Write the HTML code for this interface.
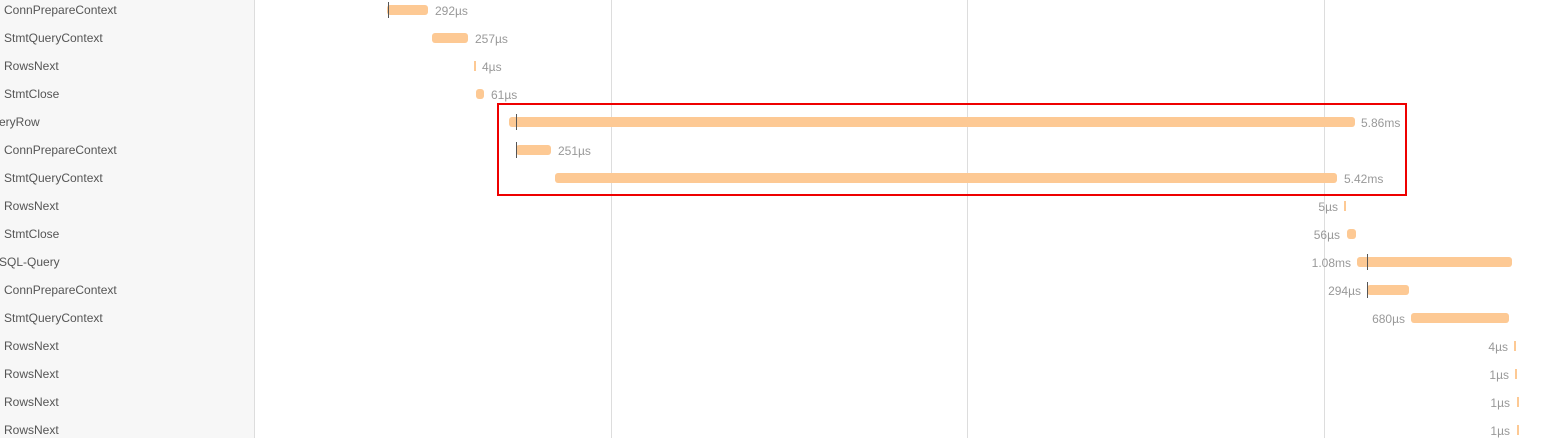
<!DOCTYPE html><html><head><style>
body{margin:0;width:1559px;height:438px;overflow:hidden;background:#fff;font-family:"Liberation Sans",Arial,sans-serif;font-size:12px;position:relative}
.side{position:absolute;left:0;top:0;width:254px;height:438px;background:#f7f7f7;border-right:1px solid #ddd;overflow:hidden}
.l{position:absolute;color:#555;white-space:nowrap;line-height:14px}
.g{position:absolute;top:0;width:1px;height:438px;background:#ddd}
.b{position:absolute;height:10px;background:#fdc994;border-radius:3px}
.t{position:absolute;width:1px;height:16px;background:#555}
.d{position:absolute;color:#999;white-space:nowrap;line-height:14px}
.r{text-align:right;width:60px}
</style></head><body>
<div class="side">
<div class="l" style="left:4px;top:3px">ConnPrepareContext</div>
<div class="l" style="left:4px;top:31px">StmtQueryContext</div>
<div class="l" style="left:4px;top:59px">RowsNext</div>
<div class="l" style="left:4px;top:87px">StmtClose</div>
<div class="l" style="left:-17px;top:115px">QueryRow</div>
<div class="l" style="left:4px;top:143px">ConnPrepareContext</div>
<div class="l" style="left:4px;top:171px">StmtQueryContext</div>
<div class="l" style="left:4px;top:199px">RowsNext</div>
<div class="l" style="left:4px;top:227px">StmtClose</div>
<div class="l" style="left:-1px;top:255px">SQL-Query</div>
<div class="l" style="left:4px;top:283px">ConnPrepareContext</div>
<div class="l" style="left:4px;top:311px">StmtQueryContext</div>
<div class="l" style="left:4px;top:339px">RowsNext</div>
<div class="l" style="left:4px;top:367px">RowsNext</div>
<div class="l" style="left:4px;top:395px">RowsNext</div>
<div class="l" style="left:4px;top:423px">RowsNext</div>
</div>
<div class="g" style="left:611px"></div><div class="g" style="left:967px"></div><div class="g" style="left:1324px"></div>

<div class="b" style="left:387px;top:5px;width:41px"></div><div class="t" style="left:388px;top:2px"></div><div class="d" style="left:435px;top:4px">292µs</div>
<div class="b" style="left:432px;top:33px;width:36px"></div><div class="d" style="left:475px;top:32px">257µs</div>
<div class="b" style="left:474px;top:61px;width:2px;border-radius:0"></div><div class="d" style="left:482px;top:60px">4µs</div>
<div class="b" style="left:476px;top:89px;width:8px"></div><div class="d" style="left:491px;top:88px">61µs</div>
<div class="b" style="left:509px;top:117px;width:846px"></div><div class="t" style="left:516px;top:114px"></div><div class="d" style="left:1361px;top:116px">5.86ms</div>
<div class="b" style="left:516px;top:145px;width:35px"></div><div class="t" style="left:516px;top:142px"></div><div class="d" style="left:558px;top:144px">251µs</div>
<div class="b" style="left:555px;top:173px;width:782px"></div><div class="d" style="left:1344px;top:172px">5.42ms</div>
<div class="b" style="left:1344px;top:201px;width:2px;border-radius:0"></div><div class="d r" style="left:1278px;top:200px">5µs</div>
<div class="b" style="left:1347px;top:229px;width:9px"></div><div class="d r" style="left:1280px;top:228px">56µs</div>
<div class="b" style="left:1357px;top:257px;width:155px"></div><div class="t" style="left:1367px;top:254px"></div><div class="d r" style="left:1291px;top:256px">1.08ms</div>
<div class="b" style="left:1367px;top:285px;width:42px"></div><div class="t" style="left:1367px;top:282px"></div><div class="d r" style="left:1301px;top:284px">294µs</div>
<div class="b" style="left:1411px;top:313px;width:98px"></div><div class="d r" style="left:1345px;top:312px">680µs</div>
<div class="b" style="left:1514px;top:341px;width:2px;border-radius:0"></div><div class="d r" style="left:1448px;top:340px">4µs</div>
<div class="b" style="left:1515px;top:369px;width:2px;border-radius:0"></div><div class="d r" style="left:1449px;top:368px">1µs</div>
<div class="b" style="left:1517px;top:397px;width:2px;border-radius:0"></div><div class="d r" style="left:1450px;top:396px">1µs</div>
<div class="b" style="left:1517px;top:425px;width:2px;border-radius:0"></div><div class="d r" style="left:1450px;top:424px">1µs</div>

<div style="position:absolute;left:497px;top:103px;width:906px;height:89px;border:2px solid #e00"></div>
</body></html>
